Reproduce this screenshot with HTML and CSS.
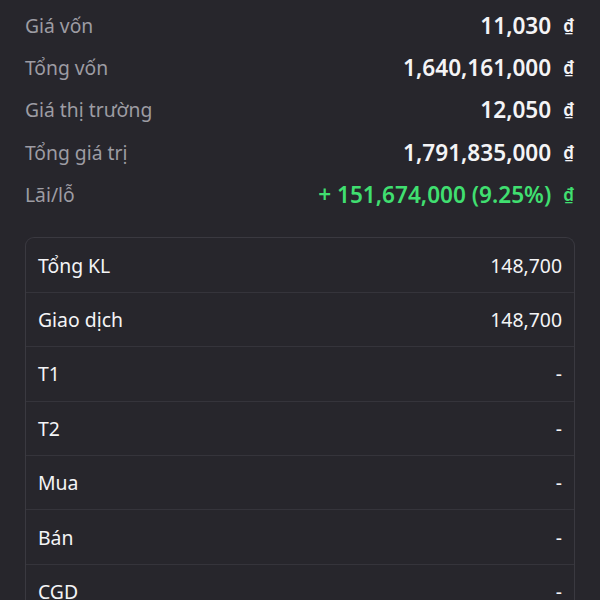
FILE: index.html
```html
<!DOCTYPE html>
<html lang="vi">
<head>
<meta charset="utf-8">
<link rel="stylesheet" href="styles.css">
</head>
<body>
<div class="page">
  <div class="summary">
    <div class="srow"><span class="slabel">Giá vốn</span><span class="sval">11,030<span class="cur">₫</span></span></div>
    <div class="srow"><span class="slabel">Tổng vốn</span><span class="sval">1,640,161,000<span class="cur">₫</span></span></div>
    <div class="srow"><span class="slabel">Giá thị trường</span><span class="sval">12,050<span class="cur">₫</span></span></div>
    <div class="srow"><span class="slabel">Tổng giá trị</span><span class="sval">1,791,835,000<span class="cur">₫</span></span></div>
    <div class="srow"><span class="slabel">Lãi/lỗ</span><span class="sval gain">+ 151,674,000 (9.25%)<span class="cur">₫</span></span></div>
  </div>
  <div class="card">
    <div class="crow"><span>Tổng KL</span><span>148,700</span></div>
    <div class="crow"><span>Giao dịch</span><span>148,700</span></div>
    <div class="crow"><span>T1</span><span>-</span></div>
    <div class="crow"><span>T2</span><span>-</span></div>
    <div class="crow"><span>Mua</span><span>-</span></div>
    <div class="crow"><span>Bán</span><span>-</span></div>
    <div class="crow"><span>CGD</span><span>-</span></div>
  </div>
</div>
</body>
</html>
```
FILE: styles.css
```css
html, body {
  margin: 0;
  padding: 0;
  background: #27262c;
}
body {
  font-family: "Noto Sans", "Open Sans", sans-serif;
  color: #f2f2f4;
}
.page {
  padding: 4px 25px 0 25px;
}
.summary {
  display: flex;
  flex-direction: column;
}
.srow {
  height: 42.3px;
  display: flex;
  align-items: center;
  justify-content: space-between;
}
.slabel {
  font-size: 19.3px;
  color: #9d9ca3;
}
.sval {
  font-size: 22.6px;
  font-weight: 600;
  color: #f4f4f6;
  display: flex;
  align-items: center;
}
.sval.gain {
  color: #40df70;
}
.cur {
  font-size: 17px;
  font-weight: 600;
  margin-left: 12px;
  margin-right: 1px;
  color: #f4f4f6;
}
.gain .cur {
  color: #40df70;
}
.card {
  margin-top: 22px;
  border: 1px solid #3a3940;
  border-bottom: none;
  border-radius: 9px 9px 0 0;
}
.crow {
  height: 53.4px;
  display: flex;
  align-items: center;
  justify-content: space-between;
  padding: 0 12px;
  border-bottom: 1px solid #35343b;
  font-size: 19.4px;
  color: #f4f4f6;
}
```
